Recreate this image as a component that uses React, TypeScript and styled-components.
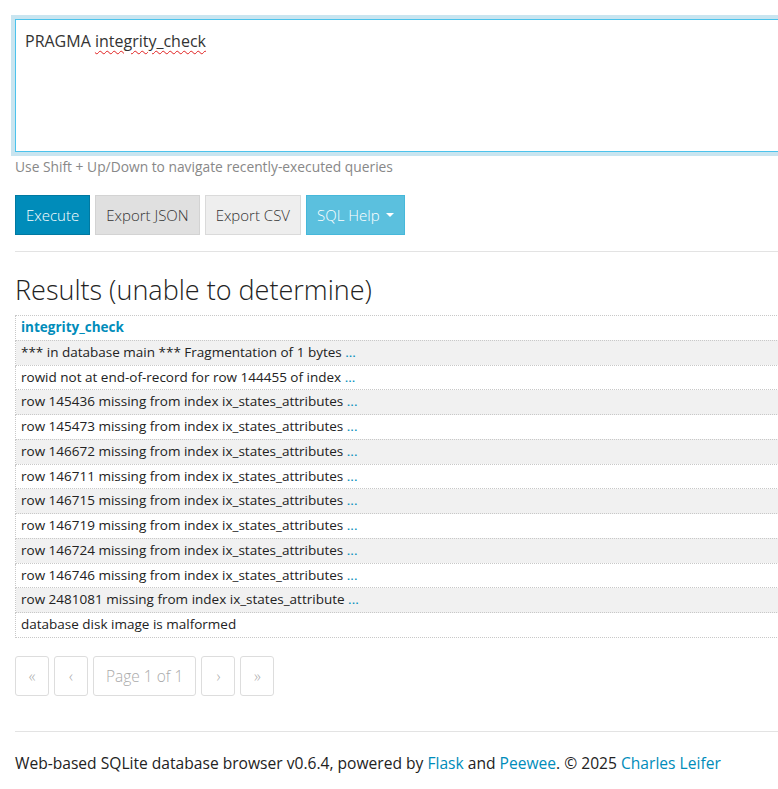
import styled, { createGlobalStyle } from "styled-components";

const GlobalStyle = createGlobalStyle`
  body {
    margin: 0;
    background: #fff;
    color: #222;
    font-family: "Open Sans", "Noto Sans", sans-serif;
    overflow-x: hidden;
  }
`;

const Page = styled.div`
  width: 900px;
  padding: 19px 0 0 15px;
`;

const Editor = styled.div`
  border: 1px solid #4cc3ec;
  box-shadow: 0 0 0 4px #c9e5f0;
  padding: 10px 9px;
  font-size: 16px;
  color: #333;
  box-sizing: border-box;
  height: 133px;
`;

const Squiggle = styled.span`
  text-decoration: underline wavy #e02020;
  text-decoration-thickness: 1px;
  text-underline-offset: 3px;
`;

const Hint = styled.p`
  margin: 5px 0 0;
  font-size: 13.8px;
  color: #888;
`;

const Toolbar = styled.div`
  display: flex;
  gap: 5px;
  margin-top: 19px;
`;

const Button = styled.button<{ $bg: string; $border: string; $fg: string }>`
  height: 40px;
  padding: 0 10px;
  font-family: inherit;
  font-size: 15px;
  font-weight: 300;
  background: ${(p) => p.$bg};
  border: 1px solid ${(p) => p.$border};
  color: ${(p) => p.$fg};
  display: flex;
  align-items: center;
  gap: 6px;
`;

const Caret = styled.span`
  width: 0;
  height: 0;
  border-left: 4px solid transparent;
  border-right: 4px solid transparent;
  border-top: 4px solid #fff;
`;

const Divider = styled.div<{ $top: number }>`
  border-top: 1px solid #e3e3e3;
  margin-top: ${(p) => p.$top}px;
`;

const Heading = styled.h3`
  margin: 20px 0 7px;
  font-size: 27px;
  font-weight: 300;
  color: #222;
  line-height: 36px;
`;

const Table = styled.table`
  border-collapse: collapse;
  width: 100%;
  font-size: 13.5px;
`;

const Cell = styled.td`
  border: 1px dotted #c8c8c8;
  padding: 2px 5px;
  line-height: 19.75px;
  color: #222;
  white-space: nowrap;
`;

const HeadCell = styled.th`
  border: 1px dotted #c8c8c8;
  padding: 2px 5px;
  line-height: 19.75px;
  text-align: left;
  color: #008cba;
  font-weight: 700;
`;

const Row = styled.tr<{ $shade: boolean }>`
  background: ${(p) => (p.$shade ? "#f1f1f1" : "#fff")};
`;

const More = styled.a`
  color: #008cba;
  text-decoration: none;
`;

const Pager = styled.div`
  display: flex;
  gap: 5px;
  margin-top: 18px;
`;

const PageBox = styled.span`
  height: 38px;
  padding: 0 12px;
  border: 1px solid #ddd;
  border-radius: 3px;
  display: flex;
  align-items: center;
  justify-content: center;
  color: #aaa;
  font-size: 15.5px;
  font-weight: 300;
  min-width: 8px;
`;

const Footer = styled.p`
  margin: 20px 0 0;
  font-size: 15.6px;
  color: #222;
`;

const Link = styled.a`
  color: #008cba;
  text-decoration: none;
`;

const rows: [string, boolean][] = [
  ["*** in database main *** Fragmentation of 1 bytes", true],
  ["rowid not at end-of-record for row 144455 of index", true],
  ["row 145436 missing from index ix_states_attributes", true],
  ["row 145473 missing from index ix_states_attributes", true],
  ["row 146672 missing from index ix_states_attributes", true],
  ["row 146711 missing from index ix_states_attributes", true],
  ["row 146715 missing from index ix_states_attributes", true],
  ["row 146719 missing from index ix_states_attributes", true],
  ["row 146724 missing from index ix_states_attributes", true],
  ["row 146746 missing from index ix_states_attributes", true],
  ["row 2481081 missing from index ix_states_attribute", true],
  ["database disk image is malformed", false],
];

export default function App() {
  return (
    <Page>
      <GlobalStyle />
      <Editor>
        PRAGMA <Squiggle>integrity_check</Squiggle>
      </Editor>
      <Hint>Use Shift + Up/Down to navigate recently-executed queries</Hint>
      <Toolbar>
        <Button $bg="#008cba" $border="#0079a1" $fg="#fff">Execute</Button>
        <Button $bg="#e0e0e0" $border="#d3d3d3" $fg="#333">Export JSON</Button>
        <Button $bg="#eeeeee" $border="#dadada" $fg="#333">Export CSV</Button>
        <Button $bg="#5bc0de" $border="#46b8da" $fg="#fff">
          SQL Help <Caret />
        </Button>
      </Toolbar>
      <Divider $top={16} />
      <Heading>Results (unable to determine)</Heading>
      <Table>
        <thead>
          <tr>
            <HeadCell>integrity_check</HeadCell>
          </tr>
        </thead>
        <tbody>
          {rows.map(([text, more], i) => (
            <Row key={i} $shade={i % 2 === 0}>
              <Cell>
                {text}
                {more && (
                  <>
                    {" "}
                    <More href="#">...</More>
                  </>
                )}
              </Cell>
            </Row>
          ))}
        </tbody>
      </Table>
      <Pager>
        <PageBox>«</PageBox>
        <PageBox>‹</PageBox>
        <PageBox>Page 1 of 1</PageBox>
        <PageBox>›</PageBox>
        <PageBox>»</PageBox>
      </Pager>
      <Divider $top={35} />
      <Footer>
        Web-based SQLite database browser v0.6.4, powered by{" "}
        <Link href="#">Flask</Link> and <Link href="#">Peewee</Link>. © 2025{" "}
        <Link href="#">Charles Leifer</Link>
      </Footer>
    </Page>
  );
}
